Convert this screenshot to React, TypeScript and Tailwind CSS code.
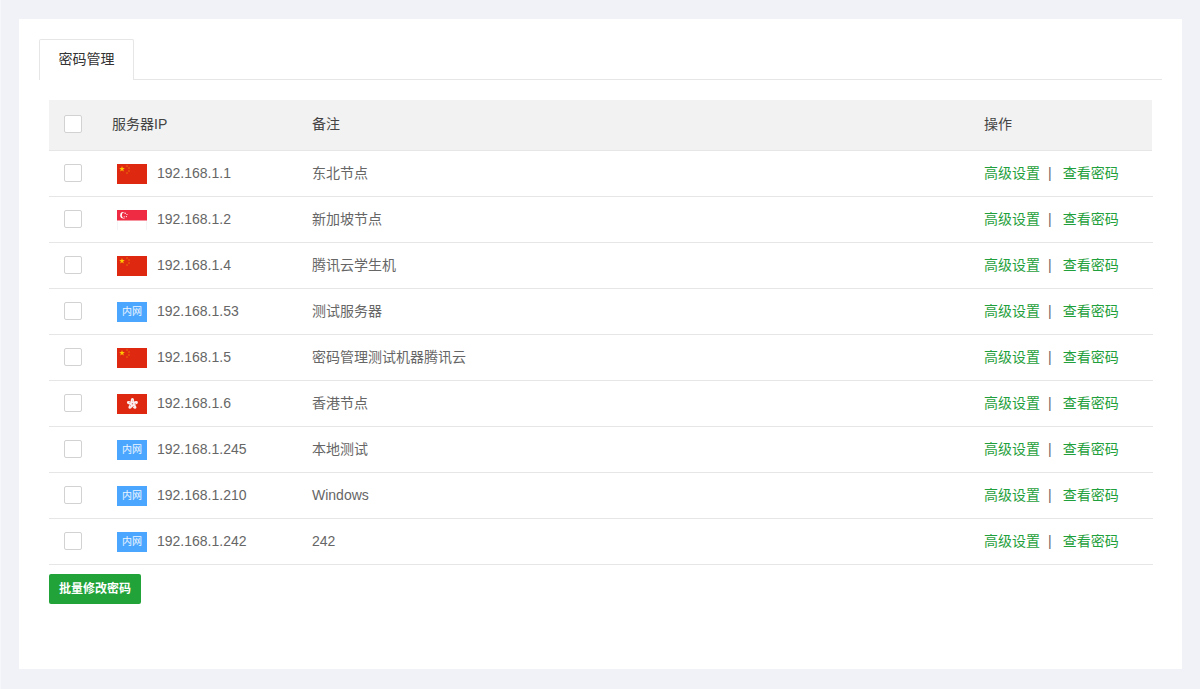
const servers = [
  { ip: '192.168.1.1', note: '东北节点', region: 'cn' },
  { ip: '192.168.1.2', note: '新加坡节点', region: 'sg' },
  { ip: '192.168.1.4', note: '腾讯云学生机', region: 'cn' },
  { ip: '192.168.1.53', note: '测试服务器', region: 'lan' },
  { ip: '192.168.1.5', note: '密码管理测试机器腾讯云', region: 'cn' },
  { ip: '192.168.1.6', note: '香港节点', region: 'hk' },
  { ip: '192.168.1.245', note: '本地测试', region: 'lan' },
  { ip: '192.168.1.210', note: 'Windows', region: 'lan' },
  { ip: '192.168.1.242', note: '242', region: 'lan' },
];

function Star({ x, y, r, fill }: { x: number; y: number; r: number; fill: string }) {
  const pts = Array.from({ length: 10 }, (_, i) => {
    const a = -Math.PI / 2 + (i * Math.PI) / 5;
    const d = i % 2 === 0 ? r : r * 0.4;
    return `${x + d * Math.cos(a)},${y + d * Math.sin(a)}`;
  }).join(' ');
  return <polygon points={pts} fill={fill} />;
}

function RegionFlag({ region }: { region: string }) {
  if (region === 'lan') {
    return (
      <span className="flex h-5 w-[30px] items-center justify-center bg-[#4ba6ff] text-[10px] text-white/90">
        内网
      </span>
    );
  }
  if (region === 'sg') {
    return (
      <svg width="30" height="20" viewBox="0 0 30 20" className="block">
        <rect width="30" height="20" fill="#ffffff" />
        <rect x="0" y="10" width="0.5" height="10" fill="#e8e8ee" />
        <rect x="29.5" y="10" width="0.5" height="10" fill="#e8e8ee" />
        <rect width="30" height="10.5" fill="#ee2b42" />
        <circle cx="6.4" cy="5.2" r="3.2" fill="#fff" />
        <circle cx="7.8" cy="5.2" r="2.9" fill="#ee2b42" />
        <circle cx="8.2" cy="3.4" r="0.6" fill="#fff" />
        <circle cx="10" cy="4.5" r="0.6" fill="#fff" />
        <circle cx="9.4" cy="6.6" r="0.6" fill="#fff" />
        <circle cx="7.2" cy="6.8" r="0.6" fill="#fff" />
      </svg>
    );
  }
  if (region === 'hk') {
    return (
      <svg width="30" height="20" viewBox="0 0 30 20" className="block">
        <rect width="30" height="20" fill="#de2910" />
        {[0, 72, 144, 216, 288].map((deg) => (
          <g key={deg} transform={`rotate(${deg} 15.4 9.8)`}>
            <ellipse cx="15.4" cy="6.9" rx="1.7" ry="2.9" fill="#fbeeee" />
            <circle cx="15.8" cy="7" r="0.4" fill="#de2910" />
          </g>
        ))}
        <circle cx="15.4" cy="9.8" r="0.7" fill="#e8727a" />
      </svg>
    );
  }
  return (
    <svg width="30" height="20" viewBox="0 0 30 20" className="block">
      <rect width="30" height="20" fill="#de2910" />
      <Star x={5} y={5} r={3} fill="#ffc800" />
      <Star x={10} y={2} r={1} fill="#f5a000" />
      <Star x={12} y={4} r={1} fill="#f5a000" />
      <Star x={12} y={7} r={1} fill="#f5a000" />
      <Star x={10} y={9} r={1} fill="#f5a000" />
    </svg>
  );
}

function CheckBox() {
  return <input type="checkbox" className="h-[18px] w-[18px] appearance-none rounded-[2px] border border-[#d2d2d2] bg-white" />;
}

export default function App() {
  return (
    <div
      className="h-[689px] w-[1200px] overflow-hidden border-l border-l-[#f6f7fa] bg-[#f0f2f7] pl-[18px] pr-[18px] pt-[19px] text-[14px] text-[#666] antialiased"
      style={{ fontFamily: '"Liberation Sans", "Noto Sans CJK SC", sans-serif' }}
    >
      <div className="h-[650px] bg-white pl-5 pr-5 pt-5">
        <div className="flex h-[41px] border-b border-[#e6e6e6]">
          <div className="flex h-[41px] w-[95px] items-center justify-center rounded-t-[2px] border border-b-0 border-[#e6e6e6] bg-white pb-[2px] text-[#333]">
            密码管理
          </div>
        </div>
        <div className="pl-2.5 pr-2.5 pt-5">
          <div className="flex h-[51px] items-center border-b border-[#e6e6e6] bg-[#f2f2f2] pb-[2px] text-[#444]">
            <div className="flex w-[63px] pl-[15px]">
              <CheckBox />
            </div>
            <div className="w-[200px]">服务器IP</div>
            <div className="w-[672px]">备注</div>
            <div>操作</div>
          </div>
          {servers.map((s) => (
            <div key={s.ip} className="flex h-[46px] w-[1104px] items-center border-b border-[#e6e6e6]">
              <div className="mb-px flex w-[63px] pl-[15px]">
                <CheckBox />
              </div>
              <div className="flex w-[200px] items-center gap-2.5 pl-[5px]">
                <RegionFlag region={s.region} />
                <span>{s.ip}</span>
              </div>
              <div className="w-[672px]">{s.note}</div>
              <div className="flex items-center text-[#1fa03c]">
                <a>高级设置</a>
                <span className="ml-2 mr-[11px] text-[#666]">|</span>
                <a>查看密码</a>
              </div>
            </div>
          ))}
          <button className="mt-[9px] flex h-[30px] w-[92px] items-center justify-center rounded-[2px] bg-[#21a33a] text-[12px] font-bold text-white">
            批量修改密码
          </button>
        </div>
      </div>
    </div>
  );
}
